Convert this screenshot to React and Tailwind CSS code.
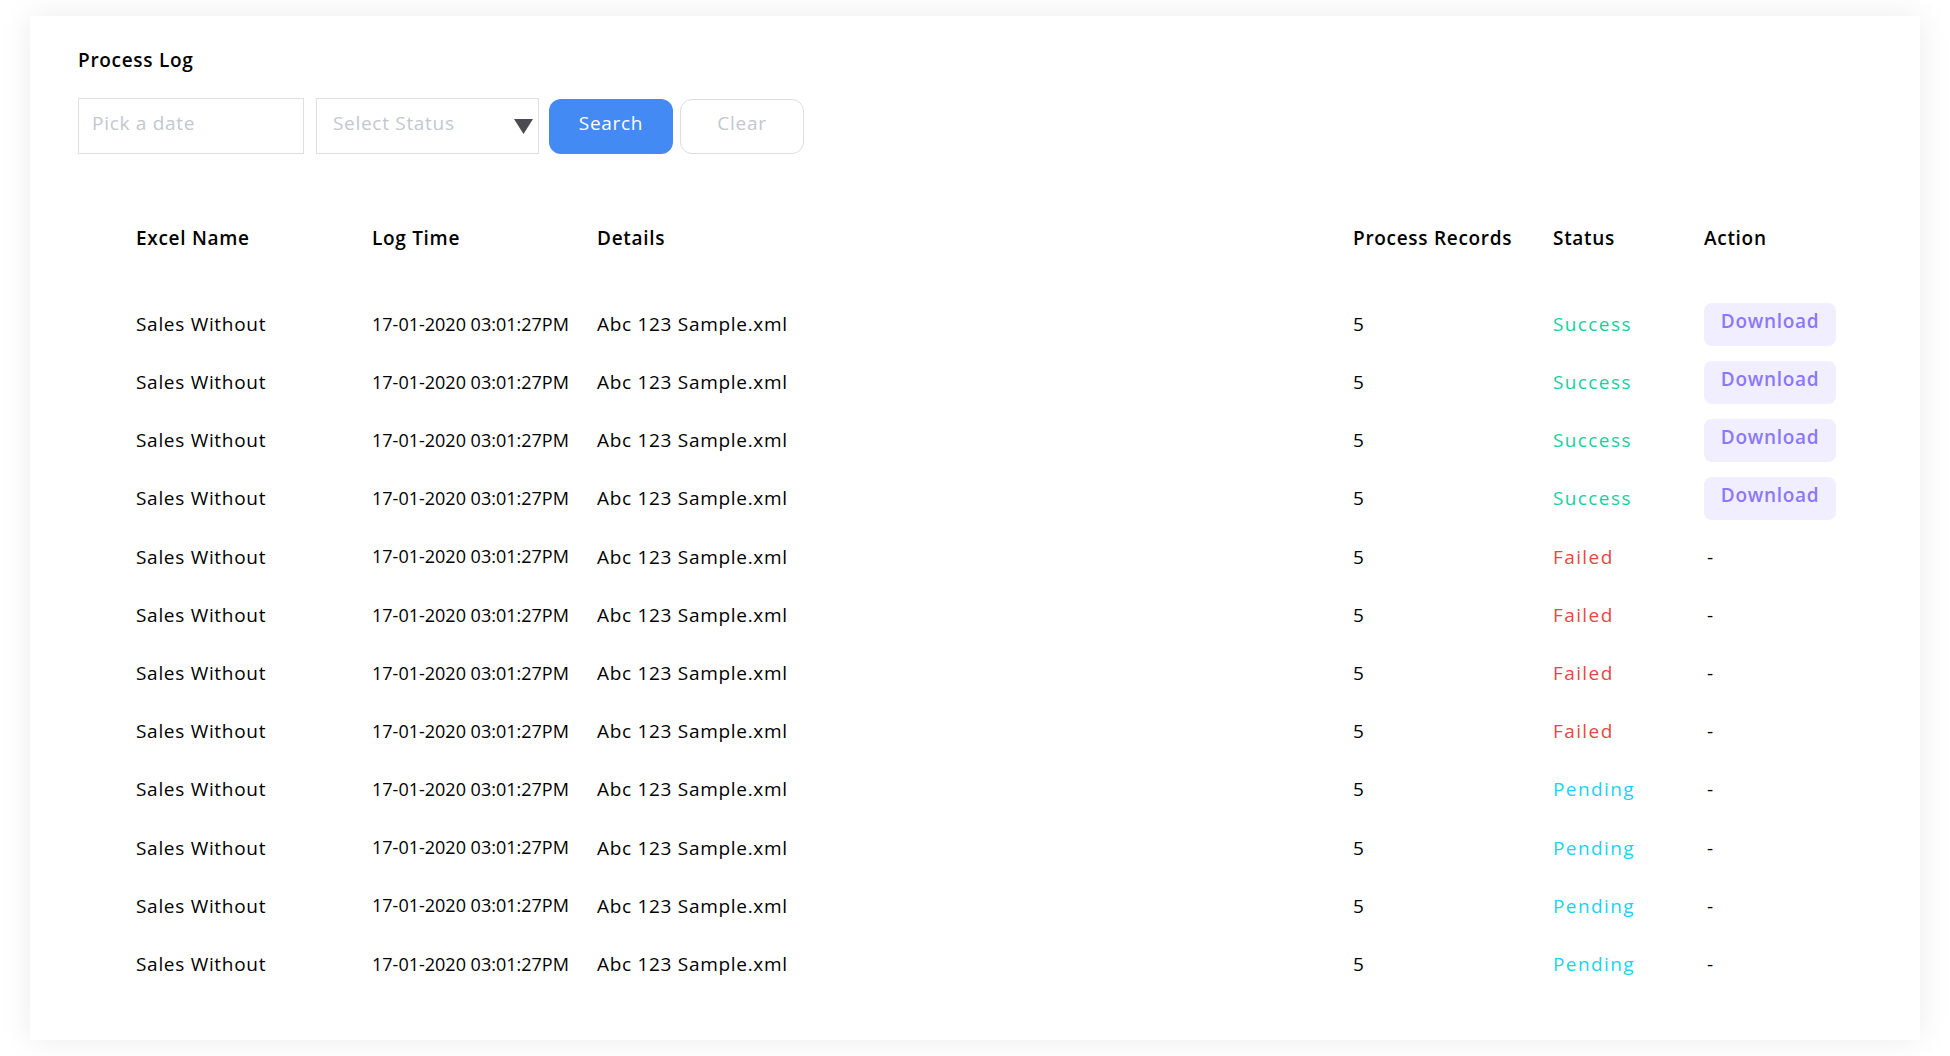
import React from 'react';

const rows = [
  ...Array(4).fill('Success'),
  ...Array(4).fill('Failed'),
  ...Array(4).fill('Pending'),
];

const statusColor = {
  Success: 'text-[#17cfa0]',
  Failed: 'text-[#e5483f]',
  Pending: 'text-[#1ad3f0]',
};

const cols = 'grid grid-cols-[236px_225px_756px_200px_151px_1fr] items-center';

const App = () => {
  return (
    <div
      className="min-h-screen bg-white px-[30px] pt-[16px] pb-[16px] text-black"
      style={{ fontFamily: '"Open Sans", "Liberation Sans", sans-serif' }}
    >
      <div className="h-[1024px] bg-white shadow-[0_0_30px_rgba(0,0,0,0.08)] px-12 pt-[31px] text-[19px] tracking-[0.7px]">
        <h1 className="leading-[27px] font-semibold">Process Log</h1>

        {/* Filters */}
        <div className="mt-[24px] flex items-center">
          <div className="w-[226px] h-[56px] border border-[#dcdfe4] flex items-center px-[13px] pb-[5px] text-[#c3c7cf]">
            Pick a date
          </div>
          <div className="ml-[12px] w-[223px] h-[56px] border border-[#dcdfe4] flex items-center justify-between pl-[16px] pr-[5px] text-[#c3c7cf]">
            <span className="pb-[5px]">Select Status</span>
            <svg width="19" height="15" viewBox="0 0 19 15">
              <polygon points="0,0 19,0 9.5,15" fill="#4b4b52" />
            </svg>
          </div>
          <button className="ml-[10px] w-[124px] h-[55px] rounded-[12px] bg-[#438af5] text-white pb-[5px]">
            Search
          </button>
          <button className="ml-[7px] w-[124px] h-[55px] rounded-[12px] border border-[#dadde2] text-[#c3c7cf] pb-[5px]">
            Clear
          </button>
        </div>

        {/* Table */}
        <div className="ml-[58px] mt-[55px]">
          <div className={`${cols} h-[58px] font-semibold`}>
            <div>Excel Name</div>
            <div>Log Time</div>
            <div>Details</div>
            <div>Process Records</div>
            <div>Status</div>
            <div>Action</div>
          </div>
          <div className="mt-[28px]">
            {rows.map((status, i) => (
              <div key={i} className={`${cols} h-[58.2px]`}>
                <div>Sales Without</div>
                <div className="text-[18px] tracking-normal">17-01-2020 03:01:27PM</div>
                <div>Abc 123 Sample.xml</div>
                <div>5</div>
                <div className={`${statusColor[status]} tracking-[1.4px]`}>{status}</div>
                <div>
                  {status === 'Success' ? (
                    <button className="w-[132px] h-[43px] rounded-[8px] bg-[#f1eeff] text-[#8b78f7] font-semibold pb-[6px]">
                      Download
                    </button>
                  ) : (
                    <span className="pl-[3px]">-</span>
                  )}
                </div>
              </div>
            ))}
          </div>
        </div>
      </div>
    </div>
  );
};

export default App;
